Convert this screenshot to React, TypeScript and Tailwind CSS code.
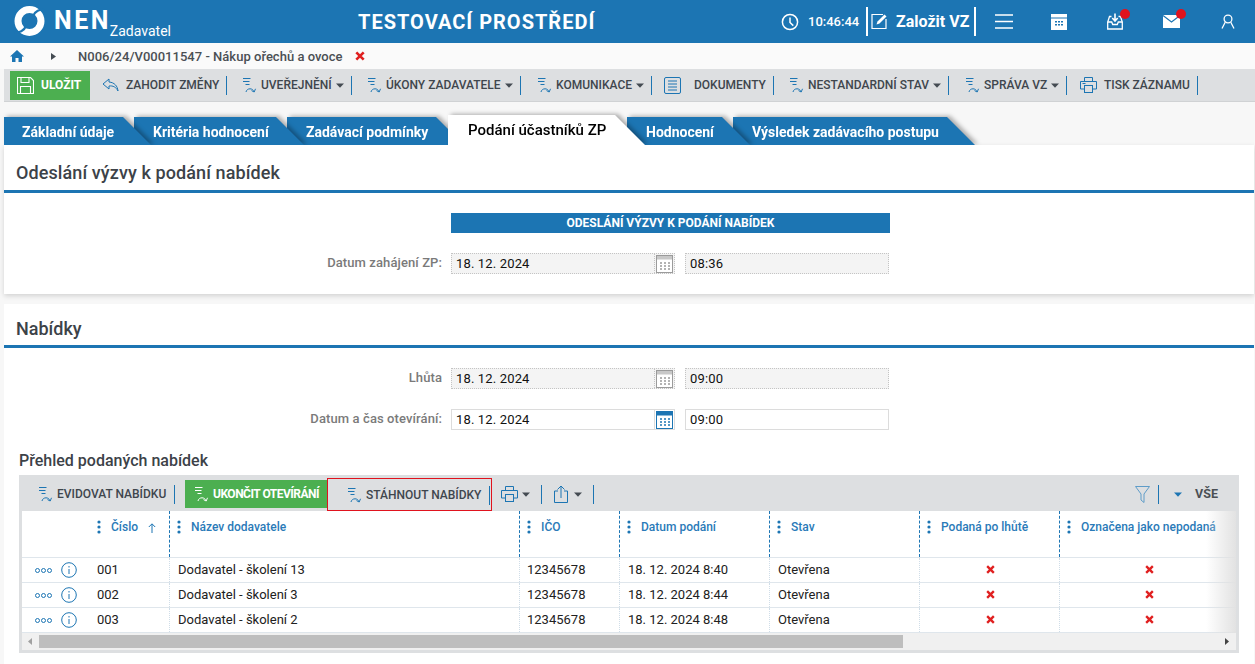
import React from 'react'

const BLUE = '#1c75b3'

function Flow({ white }: { white?: boolean }) {
  const c = white ? '#ffffff' : BLUE
  return (
    <svg width="16" height="16" viewBox="0 0 16 16" fill="none" stroke={c} strokeWidth="1" className="shrink-0">
      <path d="M2 1.500h7.500M2 4.500h6.500M4.500 7.500h4" />
      <path d="M5 15c.4-2 2-3.200 4-3.200 1.800 0 3.200 1 4 2.800M14.500 11.800l-1.300 3.200-2.700-1.400" />
    </svg>
  )
}

function Caret({ color = '#444b52' }: { color?: string }) {
  return (
    <svg width="8" height="5" viewBox="0 0 8 5" className="shrink-0">
      <path d="M0 .5h8L4 4.800z" fill={color} />
    </svg>
  )
}

function Sep() {
  return <div className="w-px h-[19px] bg-[#1c75b3] shrink-0" />
}

function ToolItem({ label, caret, icon, w }: { label: string; caret?: boolean; icon: React.ReactNode; w: string }) {
  return (
    <div className={`flex items-center shrink-0 gap-[4px] ${w}`}>
      {icon}
      <span className="whitespace-nowrap text-[12px] font-medium text-[#3f464d]">{label}</span>
      {caret && <Caret />}
    </div>
  )
}

function CalIcon({ active }: { active?: boolean }) {
  const c = active ? BLUE : '#9b9b9b'
  return (
    <svg width="17" height="18" viewBox="0 0 17 18" fill="none">
      <rect x=".5" y=".5" width="16" height="17" fill="#fff" stroke={c} />
      <rect x=".5" y=".5" width="16" height="4" fill={c} opacity={active ? 1 : 0.55} />
      <path d="M4 8h2M8 8h2M12 8h2M4 11h2M8 11h2M12 11h2M4 14h2M8 14h2M12 14h2" stroke={c} strokeWidth="1.400" />
    </svg>
  )
}

function DateRow({ label, date, time, disabled }: { label: string; date: string; time: string; disabled?: boolean }) {
  const box = disabled ? 'border-dotted border-[#c4c4c4] bg-[#f4f4f4]' : 'border-[#dcdcdc] bg-white'
  return (
    <div className="flex items-center h-[21px] mt-[20px]">
      <div className="w-[438px] text-right text-[13px] font-medium text-[#7a7a7a] tracking-[0.1px] -mt-[2px]">{label}</div>
      <div className={`ml-[9px] w-[224px] h-[21px] border flex items-center ${box}`}>
        <span className="pl-[4px] flex-1 text-[13px] text-[#111] tracking-[0.15px]">{date}</span>
        <div className={`w-[20px] h-full border-l flex items-center justify-center ${disabled ? 'border-dotted border-[#c4c4c4]' : 'border-[#dcdcdc]'}`}>
          <CalIcon active={!disabled} />
        </div>
      </div>
      <div className={`ml-[10px] w-[204px] h-[21px] border flex items-center ${box}`}>
        <span className="pl-[4px] text-[13px] text-[#111] tracking-[0.15px]">{time}</span>
      </div>
    </div>
  )
}

function RedX({ size = 10 }: { size?: number }) {
  return (
    <svg width={size} height={size} viewBox="0 0 10 10" className="shrink-0">
      <path d="M1.300 1.300l7.400 7.400M8.700 1.300L1.300 8.700" stroke="#e02020" strokeWidth="2.600" />
    </svg>
  )
}

const columns = [
  { title: 'Název dodavatele', w: 'w-[350px]' },
  { title: 'IČO', w: 'w-[100px]' },
  { title: 'Datum podání', w: 'w-[150px]' },
  { title: 'Stav', w: 'w-[150px]' },
  { title: 'Podaná po lhůtě', w: 'w-[140px]' },
  { title: 'Označena jako nepodaná', w: 'w-[177px]' },
]

const rows = [
  { no: '001', name: 'Dodavatel - školení 13', date: '18. 12. 2024 8:40' },
  { no: '002', name: 'Dodavatel - školení 3', date: '18. 12. 2024 8:44' },
  { no: '003', name: 'Dodavatel - školení 2', date: '18. 12. 2024 8:48' },
]

function Dots() {
  return (
    <svg width="4" height="14" viewBox="0 0 4 14" className="shrink-0">
      <circle cx="2" cy="2" r="1.600" fill={BLUE} />
      <circle cx="2" cy="7" r="1.600" fill={BLUE} />
      <circle cx="2" cy="12" r="1.600" fill={BLUE} />
    </svg>
  )
}

const tabs = [
  { label: 'Základní údaje', wrap: 'z-[6]', inner: 'w-[147px] pl-[18px]' },
  { label: 'Kritéria hodnocení', wrap: '-ml-[17px] z-[5]', inner: 'w-[170px] pl-[19px]' },
  { label: 'Zadávací podmínky', wrap: '-ml-[17px] z-[4]', inner: 'w-[177px] pl-[19px]' },
  { label: 'Podání účastníků ZP', wrap: '-ml-[16px] z-[7]', inner: 'w-[197px] pl-[20px]', active: true },
  { label: 'Hodnocení', wrap: '-ml-[18px] z-[3]', inner: 'w-[123px] pl-[19px]' },
  { label: 'Výsledek zadávacího postupu', wrap: '-ml-[17px] z-[2]', inner: 'w-[242px] pl-[19px]' },
]

function Tab({ label, wrap, inner, active }: { label: string; wrap: string; inner: string; active?: boolean }) {
  return (
    <div className={`relative shrink-0 [filter:drop-shadow(3px_-1px_2px_rgba(0,0,0,0.3))] ${wrap}`}>
      {active ? (
        <div className={`h-[30px] bg-white [clip-path:polygon(0_0,calc(100%-30px)_0,100%_100%,0_100%)] flex items-center text-[15px] font-medium text-black whitespace-nowrap ${inner}`}>
          {label}
        </div>
      ) : (
        <div className={`h-[28px] bg-[#1c75b3] [clip-path:polygon(0_0,calc(100%-28px)_0,100%_100%,0_100%)] flex items-center pt-[2px] text-[14px] font-bold text-white whitespace-nowrap ${inner}`}>
          {label}
        </div>
      )}
    </div>
  )
}

export default function App() {
  return (
    <div className="w-[1255px] h-[664px] overflow-hidden bg-[#f7f7f7] font-['Roboto',sans-serif]">
      {/* Top bar */}
      <div className="h-[43px] bg-[#1c75b3] flex items-center text-white">
        <div className="w-[353px] flex items-center pl-[14px]">
          <svg width="31" height="32" viewBox="0 0 31 32" className="shrink-0 -mt-[1px]">
            <circle cx="15.500" cy="16" r="11.500" fill="none" stroke="#fff" strokeWidth="7" />
            <path d="M30 5C26 4 21 6 19 11" fill="none" stroke="#1c75b3" strokeWidth="2.200" />
            <path d="M1 27C5 28 10 26 12 21" fill="none" stroke="#1c75b3" strokeWidth="2.200" />
          </svg>
          <span className="ml-[9px] text-[25px] font-bold tracking-[2.500px] leading-none -mt-[3px]">NEN</span>
          <span className="-ml-[1px] text-[14px] mt-[19px] leading-none">Zadavatel</span>
        </div>
        <div className="w-[424px] pl-[5px] text-[20px] font-bold tracking-[1px] whitespace-nowrap">TESTOVACÍ PROSTŘEDÍ</div>
        <svg width="18" height="18" viewBox="0 0 18 18" fill="none" stroke="#fff" strokeWidth="1.500" className="ml-[4px] shrink-0">
          <circle cx="9" cy="9" r="7.600" />
          <path d="M9 4.500V9.500L12.300 12.600" />
        </svg>
        <span className="ml-[9px] text-[13px] font-medium w-[50px]">10:46:44</span>
        <div className="ml-[8px] w-[2px] h-[29px] bg-white" />
        <svg width="17" height="17" viewBox="0 0 17 17" fill="none" stroke="#fff" strokeWidth="1.200" className="ml-[3px] shrink-0">
          <path d="M12 1.500H1v14h14V6" />
          <path d="M5.500 11.500l1-3L13.500 1.500l2 2-7 7z" fill="#fff" stroke="none" />
        </svg>
        <span className="ml-[8px] text-[16px] font-bold whitespace-nowrap w-[77px]">Založit VZ</span>
        <div className="ml-[1px] w-[2px] h-[29px] bg-white" />
        <svg width="18" height="15" viewBox="0 0 18 15" stroke="#fff" strokeWidth="1.600" className="ml-[19px] shrink-0">
          <path d="M0 1h18M0 7.500h18M0 14h18" />
        </svg>
        <svg width="16" height="16" viewBox="0 0 16 16" className="ml-[38px] shrink-0">
          <rect width="16" height="16" fill="#fff" />
          <rect y="3.500" width="16" height="1" fill="#1c75b3" />
          <path d="M4 7h2v1.500H4zM7 7h2v1.500H7zM10 7h2v1.500h-2zM4 10h2v1.500H4zM7 10h2v1.500H7zM10 10h2v1.500h-2z" fill="#1c75b3" />
        </svg>
        <div className="relative ml-[40px] shrink-0 w-[16px] h-[17px]">
          <svg width="16" height="17" viewBox="0 0 16 17" fill="none" stroke="#fff" strokeWidth="1.300">
            <path d="M4.500 3.500H2.500L.7 9v7h14.600V9l-1.800-5.500h-2" />
            <path d="M.7 9h4l1 2.500h4.600l1-2.500h4" />
            <path d="M8 .5v7M5.300 5l2.700 3 2.700-3" strokeWidth="1.600" />
          </svg>
          <span className="absolute -top-[4px] left-[13px] w-[10px] h-[10px] rounded-full bg-[#e0131e]" />
        </div>
        <div className="relative ml-[40px] shrink-0 w-[17px] h-[13px]">
          <svg width="17" height="13" viewBox="0 0 17 13">
            <rect width="17" height="13" fill="#fff" />
            <path d="M0 .5L8.500 7 17 .5" fill="none" stroke="#1c75b3" strokeWidth="1.200" />
          </svg>
          <span className="absolute -top-[6px] left-[13px] w-[10px] h-[10px] rounded-full bg-[#e0131e]" />
        </div>
        <svg width="14" height="15" viewBox="0 0 14 15" fill="none" stroke="#fff" strokeWidth="1.300" className="ml-[41px] shrink-0">
          <circle cx="7" cy="5" r="3.900" />
          <path d="M4.200 8.200L1 14.500M9.800 8.200L13 14.500" />
        </svg>
      </div>

      {/* Breadcrumb */}
      <div className="h-[26px] bg-[#fafafa] flex items-center">
        <svg width="14" height="12" viewBox="0 0 14 12" className="ml-[10px] shrink-0">
          <path d="M7 0L0 6.500h2V12h3.500V8h3v4H12V6.500h2z" fill="#1c75b3" />
        </svg>
        <svg width="5" height="7" viewBox="0 0 5 7" className="ml-[27px] shrink-0">
          <path d="M0 0l5 3.500L0 7z" fill="#444b52" />
        </svg>
        <span className="ml-[22px] mt-[2px] text-[13px] font-medium text-[#4a4f54] tracking-[0.02px] whitespace-nowrap">N006/24/V00011547 - Nákup ořechů a ovoce</span>
        <span className="ml-[12px]"><RedX size={10} /></span>
      </div>

      {/* Toolbar */}
      <div className="ml-[4px] h-[33px] bg-[#dddfe1] flex items-center pl-[6px] border-b border-[#d0d2d4]">
        <div className="w-[80px] h-[29px] bg-[#4caf50] flex items-center pl-[7px] gap-[7px] shrink-0">
          <svg width="17" height="17" viewBox="0 0 17 17" fill="none" stroke="#fff" strokeWidth="1.100">
            <path d="M.5.5h13l3 3v13H.500z" />
            <path d="M4 .5v5h8v-5M3.500 16.500v-7h10v7" />
          </svg>
          <span className="text-[12px] font-bold text-white">ULOŽIT</span>
        </div>
        <svg width="17" height="14" viewBox="0 0 17 14" fill="none" stroke={BLUE} className="ml-[12px] shrink-0">
          <path d="M7 1L1 6l6 5V8c4-.5 7 1 9 5-.500-5-3.500-8.500-9-9z" />
        </svg>
        <span className="ml-[7px] text-[12px] font-medium text-[#3f464d] whitespace-nowrap w-[100px]">ZAHODIT ZMĚNY</span>
        <Sep />
        <ToolItem label="UVEŘEJNĚNÍ" caret icon={<Flow />} w="w-[124px] pl-[14px]" />
        <Sep />
        <ToolItem label="ÚKONY ZADAVATELE" caret icon={<Flow />} w="w-[168px] pl-[14px]" />
        <Sep />
        <ToolItem label="KOMUNIKACE" caret icon={<Flow />} w="w-[130px] pl-[15px]" />
        <Sep />
        <div className="flex items-center w-[121px] pl-[12px] shrink-0">
          <svg width="17" height="17" viewBox="0 0 17 17" fill="none" stroke={BLUE} className="shrink-0">
            <rect x=".5" y=".5" width="16" height="16" rx="1.500" />
            <path d="M4 4h9M4 7h9M4 10h9M4 13h9" />
          </svg>
          <span className="ml-[13px] text-[12px] font-medium text-[#3f464d]">DOKUMENTY</span>
        </div>
        <Sep />
        <ToolItem label="NESTANDARDNÍ STAV" caret icon={<Flow />} w="w-[174px] pl-[14px]" />
        <Sep />
        <ToolItem label="SPRÁVA VZ" caret icon={<Flow />} w="w-[117px] pl-[15px]" />
        <Sep />
        <div className="flex items-center w-[130px] pl-[13px] shrink-0">
          <svg width="17" height="16" viewBox="0 0 17 16" fill="none" stroke={BLUE} className="shrink-0">
            <path d="M4.500 4V.5h8V4M4 12H.5V4.500h16V12H13" />
            <rect x="4.500" y="8.500" width="8" height="7" />
            <path d="M2.500 6.500h3" />
          </svg>
          <span className="ml-[7px] text-[12px] font-medium text-[#3f464d] whitespace-nowrap">TISK ZÁZNAMU</span>
        </div>
        <Sep />
      </div>

      {/* Tabs */}
      <div className="h-[43px] flex items-end pl-[4px] overflow-hidden">
        {tabs.map((t) => (
          <Tab key={t.label} {...t} />
        ))}
      </div>

      {/* Odeslání výzvy */}
      <div className="ml-[4px] mr-[1px] h-[149px] bg-white shadow-[0_2px_5px_rgba(0,0,0,0.15)]">
        <div className="h-[48px] pt-[17px] pl-[12px] text-[18px] leading-[22px] font-medium tracking-[0.1px] text-[#3c4248] border-b-[3px] border-[#1c75b3]">Odeslání výzvy k podání nabídek</div>
        <div className="ml-[447px] mt-[20px] w-[439px] h-[20px] bg-[#1c75b3] flex items-center justify-center text-[12px] font-bold text-white">ODESLÁNÍ VÝZVY K PODÁNÍ NABÍDEK</div>
        <DateRow label="Datum zahájení ZP:" date="18. 12. 2024" time="08:36" disabled />
      </div>

      {/* Nabídky */}
      <div className="ml-[4px] mr-[1px] mt-[10px] h-[360px] bg-white">
        <div className="h-[44px] pt-[14px] pl-[12px] text-[18px] leading-[22px] font-medium text-[#3c4248] border-b-[3px] border-[#1c75b3]">Nabídky</div>
        <DateRow label="Lhůta" date="18. 12. 2024" time="09:00" disabled />
        <DateRow label="Datum a čas otevírání:" date="18. 12. 2024" time="09:00" />
        <div className="mt-[20px] ml-[15px] pt-[1px] h-[20px] text-[16px] leading-[20px] font-medium text-[#3c4248]">Přehled podaných nabídek</div>

        {/* Table box */}
        <div className="mt-[5px] ml-[15px] w-[1220px] h-[178px] bg-[#dddfe1] flex flex-col">
          <div className="h-[36px] flex items-center pt-[2px]">
            <div className="flex items-center pl-[18px] gap-[4px] w-[155px] shrink-0">
              <Flow />
              <span className="text-[12px] font-medium text-[#3f464d] whitespace-nowrap">EVIDOVAT NABÍDKU</span>
            </div>
            <Sep />
            <div className="ml-[10px] w-[142px] h-[28px] bg-[#4caf50] flex items-center pl-[8px] gap-[4px] shrink-0">
              <Flow white />
              <span className="text-[12px] font-bold text-white whitespace-nowrap tracking-[-0.5px]">UKONČIT OTEVÍRÁNÍ</span>
            </div>
            <div className="self-start mt-[1px] w-[165px] h-[33px] border border-[#e0131e] flex items-center pl-[18px] pt-[1px] gap-[4px] shrink-0">
              <Flow />
              <span className="text-[12px] font-medium text-[#3f464d] whitespace-nowrap">STÁHNOUT NABÍDKY</span>
              <span className="ml-auto mr-[1px]"><Sep /></span>
            </div>
            <svg width="17" height="16" viewBox="0 0 17 16" fill="none" stroke={BLUE} className="ml-[9px] shrink-0">
              <path d="M4.500 4V.5h8V4M4 12H.5V4.500h16V12H13" />
              <rect x="4.500" y="8.500" width="8" height="7" />
            </svg>
            <span className="ml-[4px]"><Caret /></span>
            <span className="ml-[11px]"><Sep /></span>
            <svg width="14" height="18" viewBox="0 0 14 18" fill="none" stroke={BLUE} className="ml-[12px] shrink-0">
              <path d="M4 6H.5v11.500h13V6H10M7 13V1M3.500 4.500L7 1l3.500 3.500" />
            </svg>
            <span className="ml-[6px]"><Caret /></span>
            <span className="ml-[11px]"><Sep /></span>
            <div className="ml-auto flex items-center pr-[21px]">
              <svg width="15" height="17" viewBox="0 0 15 17" fill="none" stroke="#5e9cc8" className="shrink-0">
                <path d="M.5.5h14L9 8v8.500L6 14V8z" />
              </svg>
              <span className="ml-[8px]"><Sep /></span>
              <span className="ml-[15px]"><Caret color={BLUE} /></span>
              <span className="ml-[13px] text-[12.5px] font-bold text-[#4a4f54]">VŠE</span>
            </div>
          </div>

          <div className="ml-[3px] w-[1214px] bg-white relative overflow-hidden">
            {/* Header row */}
            <div className="flex h-[47px] border-b border-[#dfe6ec]">
              <div className="w-[147px] shrink-0 flex items-start pt-[9px] pl-[75px] gap-[10px]">
                <Dots />
                <span className="text-[12px] font-medium text-[#2a7ab8] leading-[14px]">Číslo</span>
                <svg width="8" height="10" viewBox="0 0 8 10" fill="none" stroke={BLUE} className="mt-[3px] shrink-0">
                  <path d="M4 10V1M.8 4L4 .8 7.200 4" />
                </svg>
              </div>
              {columns.map((c) => (
                <div key={c.title} className={`${c.w} shrink-0 flex items-start pt-[9px] pl-[7px] gap-[10px] border-l border-dashed border-[#1c75b3]`}>
                  <Dots />
                  <span className="text-[12px] font-medium text-[#2a7ab8] leading-[14px] whitespace-nowrap">{c.title}</span>
                </div>
              ))}
            </div>
            {/* Rows */}
            {rows.map((r) => (
              <div key={r.no} className="flex h-[25px] border-b border-[#dfe6ec] text-[13px] text-[#212121] items-stretch">
                <div className="w-[147px] shrink-0 flex items-center pl-[13px]">
                  <span className="flex gap-[1px] w-[26px]">
                    {[0, 1, 2].map((i) => <span key={i} className="w-[5px] h-[5px] rounded-full border border-[#1c75b3]" />)}
                  </span>
                  <svg width="16" height="16" viewBox="0 0 16 16" fill="none" stroke={BLUE} className="shrink-0">
                    <circle cx="8" cy="8" r="7.300" />
                    <path d="M8 7v5M8 4v1.500" />
                  </svg>
                  <span className="ml-[20px]">{r.no}</span>
                </div>
                <div className="w-[350px] shrink-0 flex items-center pl-[8px] border-l border-dotted border-[#cfdde8]">{r.name}</div>
                <div className="w-[100px] shrink-0 flex items-center pl-[7px] border-l border-dotted border-[#cfdde8]">12345678</div>
                <div className="w-[150px] shrink-0 flex items-center pl-[8px] border-l border-dotted border-[#cfdde8]">{r.date}</div>
                <div className="w-[150px] shrink-0 flex items-center pl-[8px] border-l border-dotted border-[#cfdde8]">Otevřena</div>
                <div className="w-[140px] shrink-0 flex items-center justify-center pl-[2px] pb-[2px] border-l border-dotted border-[#cfdde8]"><RedX size={9} /></div>
                <div className="w-[177px] shrink-0 flex items-center justify-center pl-[3px] pb-[2px] border-l border-dotted border-[#cfdde8]"><RedX size={9} /></div>
              </div>
            ))}
            <div className="absolute top-0 right-0 bottom-[17px] w-[30px] bg-gradient-to-r from-transparent to-[#e2e2e2]" />
            {/* Scrollbar */}
            <div className="h-[17px] bg-[#f0f0f0] flex items-center">
              <svg width="4" height="7" viewBox="0 0 4 7" className="ml-[6px] shrink-0"><path d="M4 0L0 3.500 4 7z" fill="#a0a0a0" /></svg>
              <div className="ml-[7px] w-[864px] h-[13px] bg-[#bebebe]" />
              <svg width="4" height="7" viewBox="0 0 4 7" className="ml-auto mr-[7px] shrink-0"><path d="M0 0l4 3.500L0 7z" fill="#444" /></svg>
            </div>
          </div>
        </div>
      </div>
    </div>
  )
}
